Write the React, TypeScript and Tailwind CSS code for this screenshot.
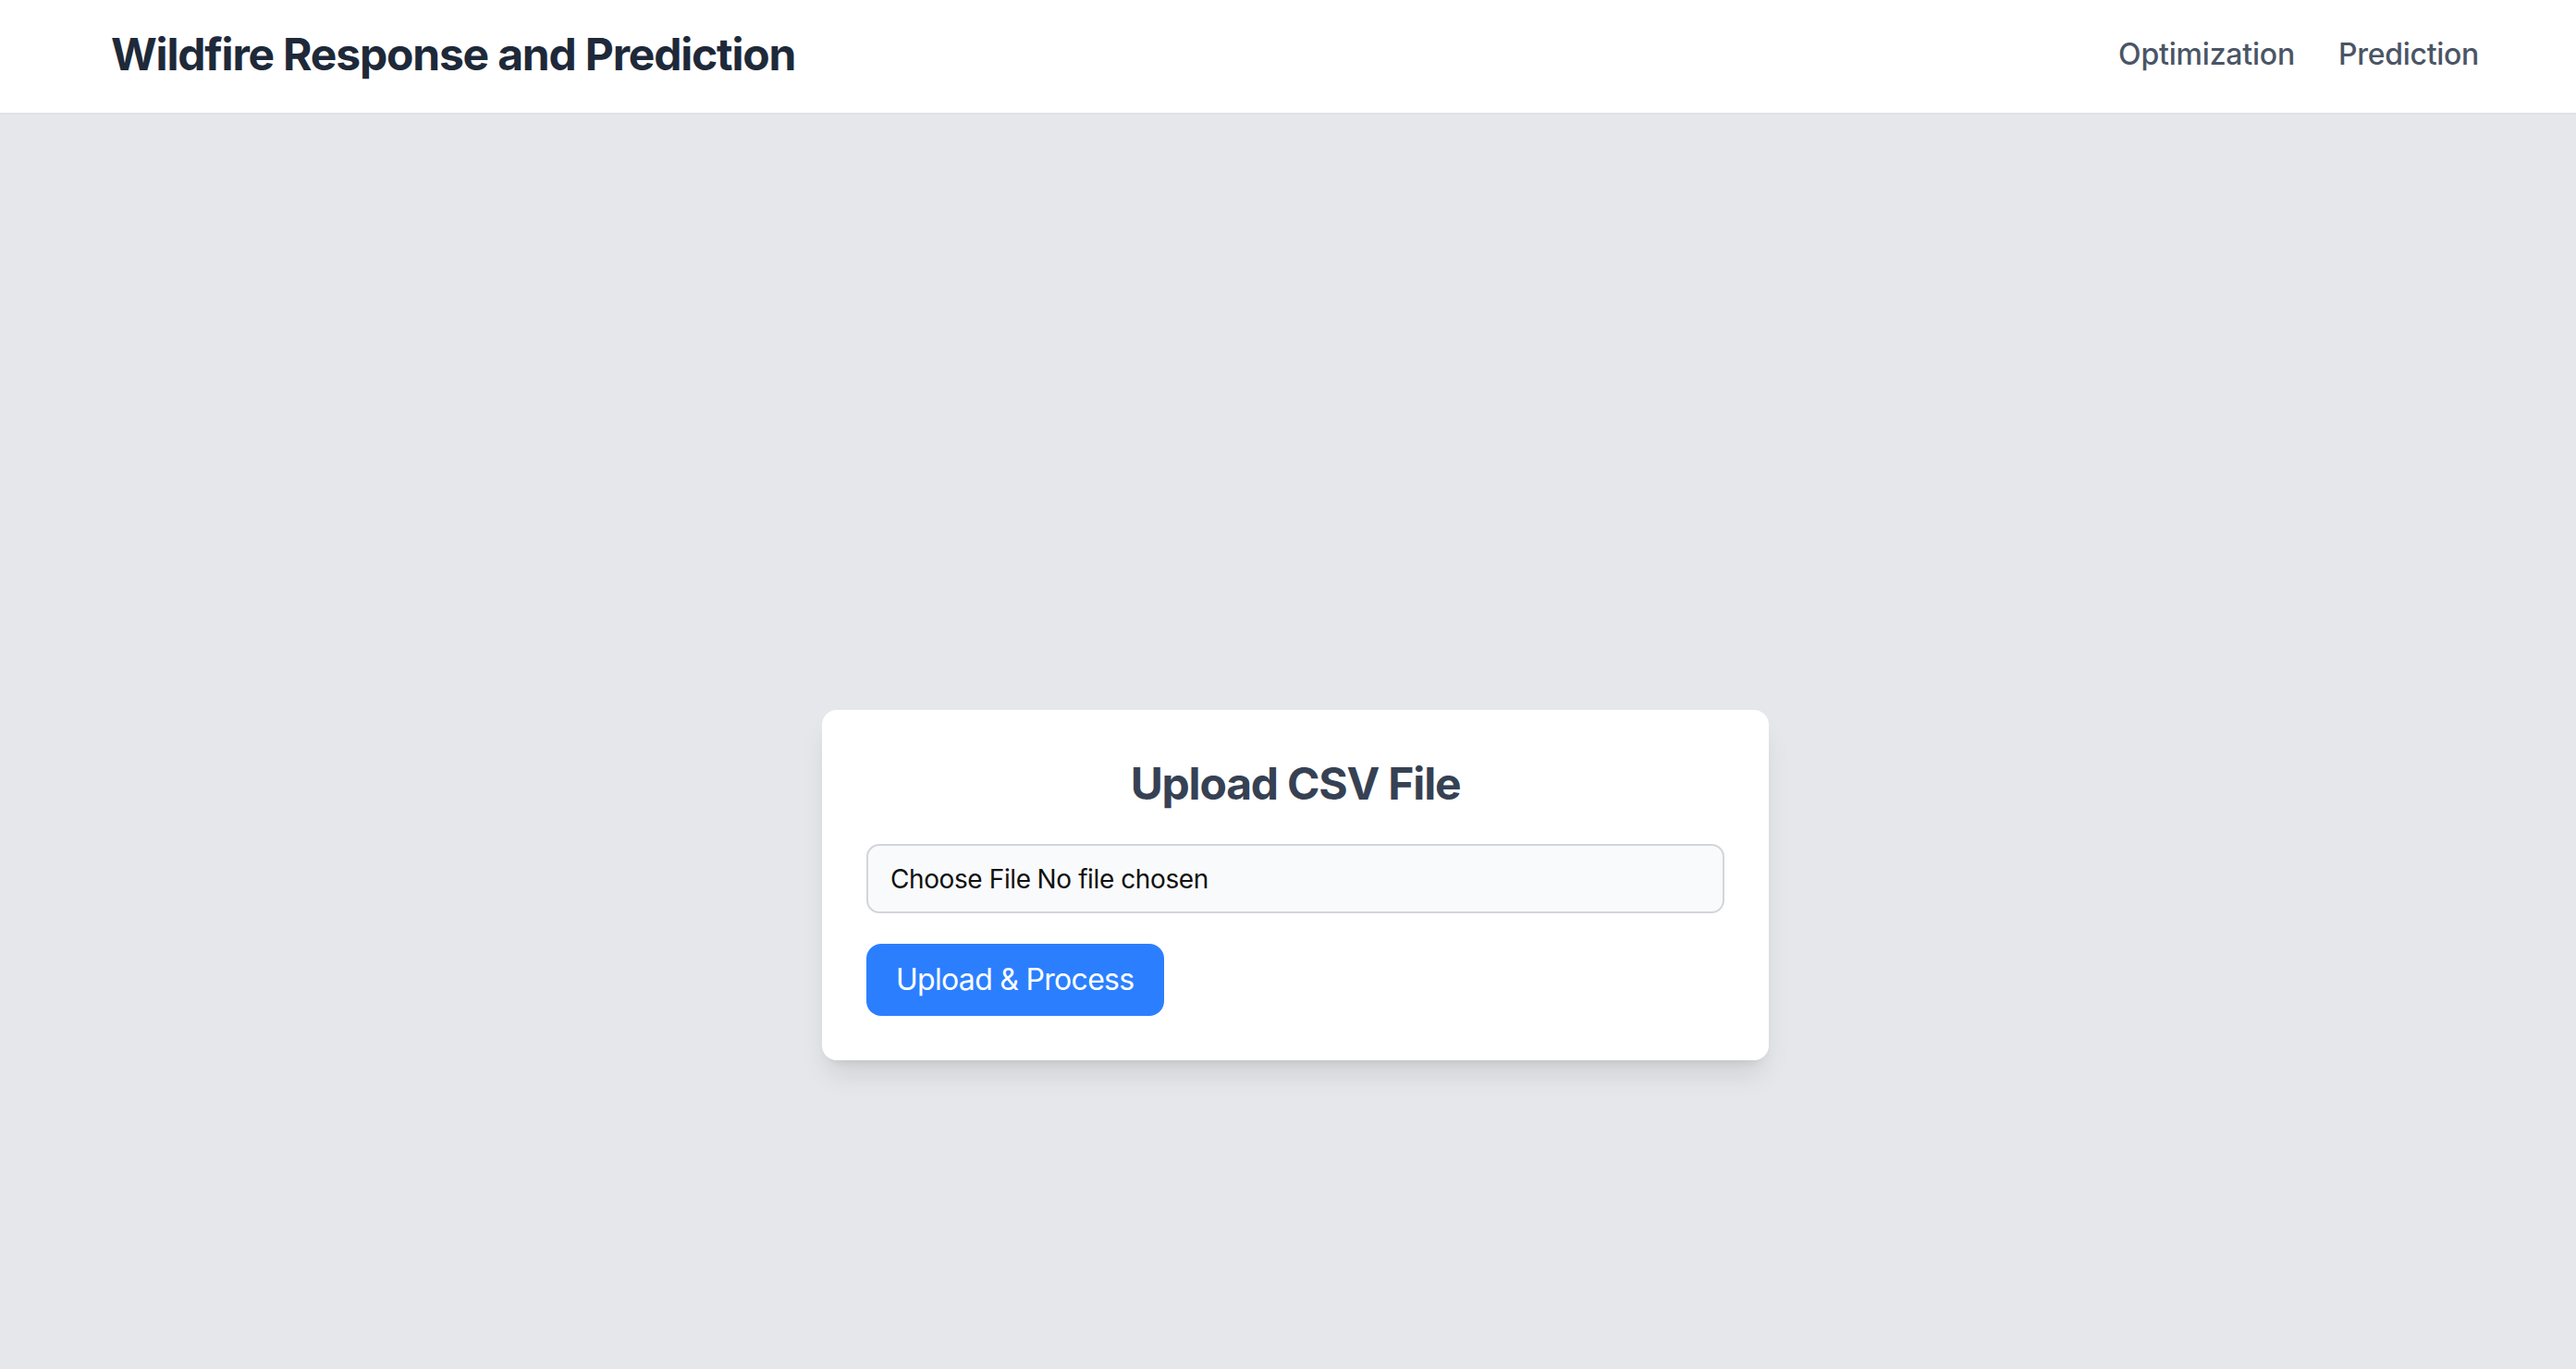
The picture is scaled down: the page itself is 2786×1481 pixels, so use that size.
export default function App() {
  return (
    <div
      className="min-h-screen bg-[#e5e7eb]"
      style={{ fontFamily: 'Inter, "Noto Sans", "Liberation Sans", sans-serif' }}
    >
      <header className="h-[122px] bg-white flex items-center justify-between pl-[120px] pr-[105px] pb-[5px] shadow-[0_1px_2px_0_rgba(0,0,0,0.05)]">
        <h1 className="text-[48px] leading-[64px] font-bold text-[#1e2939] tracking-[-1.2px]">
          Wildfire Response and Prediction
        </h1>
        <nav className="flex items-center gap-[47px]">
          <a href="#" className="text-[32px] leading-[48px] font-medium text-[#4a5565] tracking-[-0.2px]">
            Optimization
          </a>
          <a href="#" className="text-[32px] leading-[48px] font-medium text-[#4a5565] tracking-[-0.3px]">
            Prediction
          </a>
        </nav>
      </header>
      <main className="flex justify-center pl-[16px] pt-[646px] pb-[200px]">
        <div className="w-[1024px] bg-white rounded-[16px] p-[48px] shadow-[0_20px_30px_-6px_rgba(0,0,0,0.1),0_8px_12px_-8px_rgba(0,0,0,0.1)]">
          <h2 className="text-center text-[48px] leading-[64px] font-bold text-[#364153] tracking-[-1.2px]">
            Upload CSV File
          </h2>
          <label className="mt-[33px] flex items-center h-[75px] w-full rounded-[14px] border-2 border-[#d1d5dc] bg-[#f9fafb] px-[24px] text-[28px] leading-[40px] text-[#101010] tracking-[-0.4px] cursor-pointer">
            <input type="file" accept=".csv" className="sr-only" />
            <span>Choose File</span>
            <span className="ml-[7px]">No file chosen</span>
          </label>
          <button className="mt-[33px] h-[78px] px-[32px] rounded-[16px] bg-[#2b7fff] text-white text-[32px] leading-[48px] tracking-[-0.7px]">
            Upload &amp; Process
          </button>
        </div>
      </main>
    </div>
  );
}
